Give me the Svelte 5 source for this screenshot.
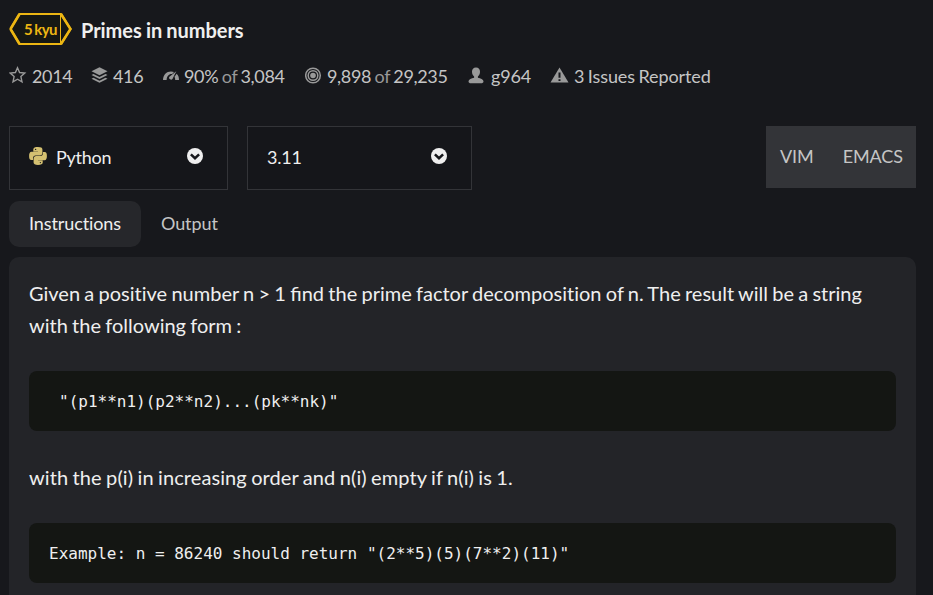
<script>
  const tabs = ['Instructions', 'Output'];
  const selects = [
    { label: 'Python', python: true },
    { label: '3.11', python: false }
  ];
</script>

{#snippet chevron()}
  <svg class="chev" viewBox="0 0 16 16" width="16" height="16">
    <circle cx="8" cy="8" r="8" fill="#efefef" />
    <path d="M3.900 6.300 8 10.200l4.100-3.900" fill="none" stroke="#15161a" stroke-width="2.500" />
  </svg>
{/snippet}

<main>
  <header>
    <div class="rank">
      <svg viewBox="0 0 63 32" width="63" height="32">
        <path d="M10.5 1H52L61.5 16 52 31H10.5L1.5 16Z" fill="#161814" stroke="#ecb613" stroke-width="2" />
        <path d="M1.5 16 10.5 1M1.5 16l9 15M52 1l9.5 15L52 31" fill="none" stroke="#ecb613" stroke-width="2.6" />
        <path d="M51.5 1v30" stroke="#ecb613" stroke-width="1" />
      </svg>
      <span>5 kyu</span>
    </div>
    <h1>Primes in numbers</h1>
  </header>

  <div class="stats">
    <div class="stat" style:width="82px">
      <svg width="18" height="18" viewBox="0 0 18 18"><path d="M8.5 1.8 10.6 6.5l5.2.6-3.9 3.5 1.1 5.2-4.5-2.6L4 15.800l1.100-5.200L1.200 7.100l5.200-.6Z" fill="none" stroke="#999" stroke-width="1.4" /></svg>
      <b>2014</b>
    </div>
    <div class="stat" style:width="72px">
      <svg width="17" height="18" viewBox="0 0 17 18"><g fill="#999"><path d="M8.500 1.300 16.500 5.300 8.500 9.300 .5 5.300Z" /><path d="m.5 9 2-1 6 3 6-3 2 1-8 4Z" /><path d="m.5 12.700 2-1 6 3 6-3 2 1-8 4Z" /></g></svg>
      <b>416</b>
    </div>
    <div class="stat" style:width="142px">
      <svg width="16" height="18" viewBox="0 0 16 18"><g fill="#999"><path d="M0 14C.2 8.800 3.500 5.500 8 5.500c1.100 0 2.100.2 3 .6L9.200 8C6 7.600 3.800 10 3.600 14Z" /><path d="M13.300 5.200 9.600 12.800A2 2 0 0 1 6.100 11Z" /><path d="M13.700 7.800C15.200 9.200 16 11.300 16 14h-3.800c0-1.500-.2-2.500-.7-3.300Z" /></g></svg>
      <b>90% <i>of</i> 3,084</b>
    </div>
    <div class="stat low" style:width="163px">
      <svg width="17" height="18" viewBox="0 0 17 18"><g fill="none" stroke="#999" stroke-width="1.500"><circle cx="8" cy="8.500" r="7.300" /><circle cx="8" cy="8.500" r="4.800" /></g><circle cx="8" cy="8.500" r="2.800" fill="#999" /></svg>
      <b>9,898 <i>of</i> 29,235</b>
    </div>
    <div class="stat low" style:width="82px">
      <svg width="17" height="18" viewBox="0 0 17 18"><path d="M8 .5c2.600 0 4 1.700 4 4.300 0 2-.8 3.700-2.100 4.600v1.400c2.700.7 5.400 1.500 5.600 3.400 0 1.500-1 2-2.500 2H3c-1.500 0-2.500-.5-2.500-2 .2-1.900 2.900-2.700 5.600-3.400V9.400C4.800 8.500 4 6.800 4 4.800 4 2.200 5.400.5 8 .5Z" fill="#999" /></svg>
      <b class="user">g964</b>
    </div>
    <div class="stat last">
      <svg width="19" height="18" viewBox="0 0 19 18"><path d="M9.500 1.500 18.500 16.500H.5Z" fill="#999" /><path d="M9.500 6.500v5.200M9.500 13.200v1.800" stroke="#17181c" stroke-width="2" /></svg>
      <b>3 Issues Reported</b>
    </div>
  </div>

  <div class="controls">
    {#each selects as s}
      <div class="select" class:version={!s.python}>
        {#if s.python}
          <svg class="py" width="18" height="18" viewBox="0 0 18 18">
            <path d="M4.300 2.200C4.500.7 6 .1 9 .1s4.300.8 4.400 2.300v3.700c0 1.600-1 2.500-2.500 2.500H6.500C5 8.600 4.100 9.700 4.100 11v2H2.300C.7 13 .1 11.500.1 9s.7-4.200 2.400-4.200H9v-.4H4.300Z" fill="#d4c071" />
            <path d="M13.700 15.800c-.2 1.500-1.700 2.100-4.700 2.100s-4.300-.8-4.400-2.300v-3.700c0-1.600 1-2.900 2.500-2.900h4.400c1.500 0 2.400-1.100 2.400-2.400V5h1.800c1.600 0 2.200 1.500 2.200 4s-.7 4.200-2.400 4.200H9v.4h4.700Z" fill="#d4c071" />
            <circle cx="6.600" cy="2.400" r=".7" fill="#222" /><circle cx="11.400" cy="15.600" r=".7" fill="#222" />
          </svg>
        {/if}
        <span>{s.label}</span>
        {@render chevron()}
      </div>
    {/each}
    <div class="modes"><span>VIM</span><span>EMACS</span></div>
  </div>

  <nav>
    {#each tabs as t, i}
      <div class="tab" class:active={i === 0}>{t}</div>
    {/each}
  </nav>

  <section>
    <p>Given a positive number n &gt; 1 <span class="lig">find</span> the prime factor decomposition of n. The result will be a string<br />with the following form :</p>
    <pre class="indent">{'"(p1**n1)(p2**n2)...(pk**nk)"'}</pre>
    <p class="second">with the p(i) in increasing order and n(i) empty if n(i) is 1.</p>
    <pre>{'Example: n = 86240 should return "(2**5)(5)(7**2)(11)"'}</pre>
  </section>
</main>

<style>
  :global(body) { background: #17181c; }
  main {
    box-sizing: border-box;
    width: 933px;
    height: 595px;
    padding: 13px 17px 0 9px;
    overflow: hidden;
    background: #17181c;
    color: #efefef;
    font-family: Lato, sans-serif;
    font-size: 18px;
    font-variant-ligatures: none;
  }
  svg { flex: none; display: block; }
  header { display: flex; height: 32px; align-items: center; }
  .rank { position: relative; width: 63px; height: 32px; }
  .rank span {
    position: absolute;
    left: 15px;
    top: 7px;
    color: #ecb613;
    font-size: 15px;
    font-weight: 700;
    line-height: 18px;
    letter-spacing: -.55px;
    word-spacing: -1px;
    white-space: nowrap;
  }
  h1 { margin: 2px 0 0 9px; font-size: 20px; line-height: 28px; letter-spacing: -.05px; word-spacing: -.6px; }
  .stats { display: flex; height: 24px; margin-top: 19px; align-items: center; white-space: nowrap; }
  .stat { display: flex; gap: 5px; align-items: center; }
  .stat svg { margin-top: -3px; }
  .stat.low svg { margin-top: -1px; }
  .stat b { font-weight: 400; color: #c5c5c5; line-height: 24px; letter-spacing: -.35px; word-spacing: -.8px; }
  .stat.last b { letter-spacing: -.1px; word-spacing: -1px; }
  .stat .user { margin-left: 1px; letter-spacing: -.2px; }
  .stat i { font-style: normal; color: #999; }
  .controls { display: flex; margin-top: 38px; height: 64px; }
  .select {
    box-sizing: border-box;
    display: flex;
    align-items: center;
    width: 219px;
    height: 64px;
    padding: 0 24.500px 0 19px;
    border: 1px solid #333438;
    background: #15161a;
    letter-spacing: -.25px;
  }
  .select span { margin-top: -2px; }
  .version { width: 225px; margin-left: 19px; }
  .select .py { margin: -4px 9px 0 0; }
  .select .chev { margin: -4px 0 0 auto; }
  .modes {
    display: flex;
    gap: 29px;
    box-sizing: border-box;
    width: 150px;
    height: 62px;
    margin-left: auto;
    padding-left: 14px;
    line-height: 60px;
    background: #333438;
    color: #c5c5c5;
    letter-spacing: -.1px;
  }
  nav { display: flex; margin-top: 11px; }
  .tab { box-sizing: border-box; height: 46px; line-height: 44px; padding: 0 20px; border-radius: 10px; color: #c5c5c5; letter-spacing: -.1px; }
  .active { width: 132px; background: #26272b; color: #efefef; }
  section {
    height: 400px;
    margin-top: 10px;
    padding: 20px 20px;
    border-radius: 10px;
    background: #232428;
  }
  p { margin: 0; font-size: 20px; line-height: 32px; word-spacing: -.85px; white-space: nowrap; }
  .second { letter-spacing: .09px; }
  .lig { font-variant-ligatures: normal; }
  pre {
    box-sizing: border-box;
    height: 60px;
    margin: 30px 0;
    padding: 1px 20px 0;
    border-radius: 8px;
    background: #141613;
    font: 16px/60px "DejaVu Sans Mono", monospace;
  }
  .indent { padding-left: 30px; }
</style>
